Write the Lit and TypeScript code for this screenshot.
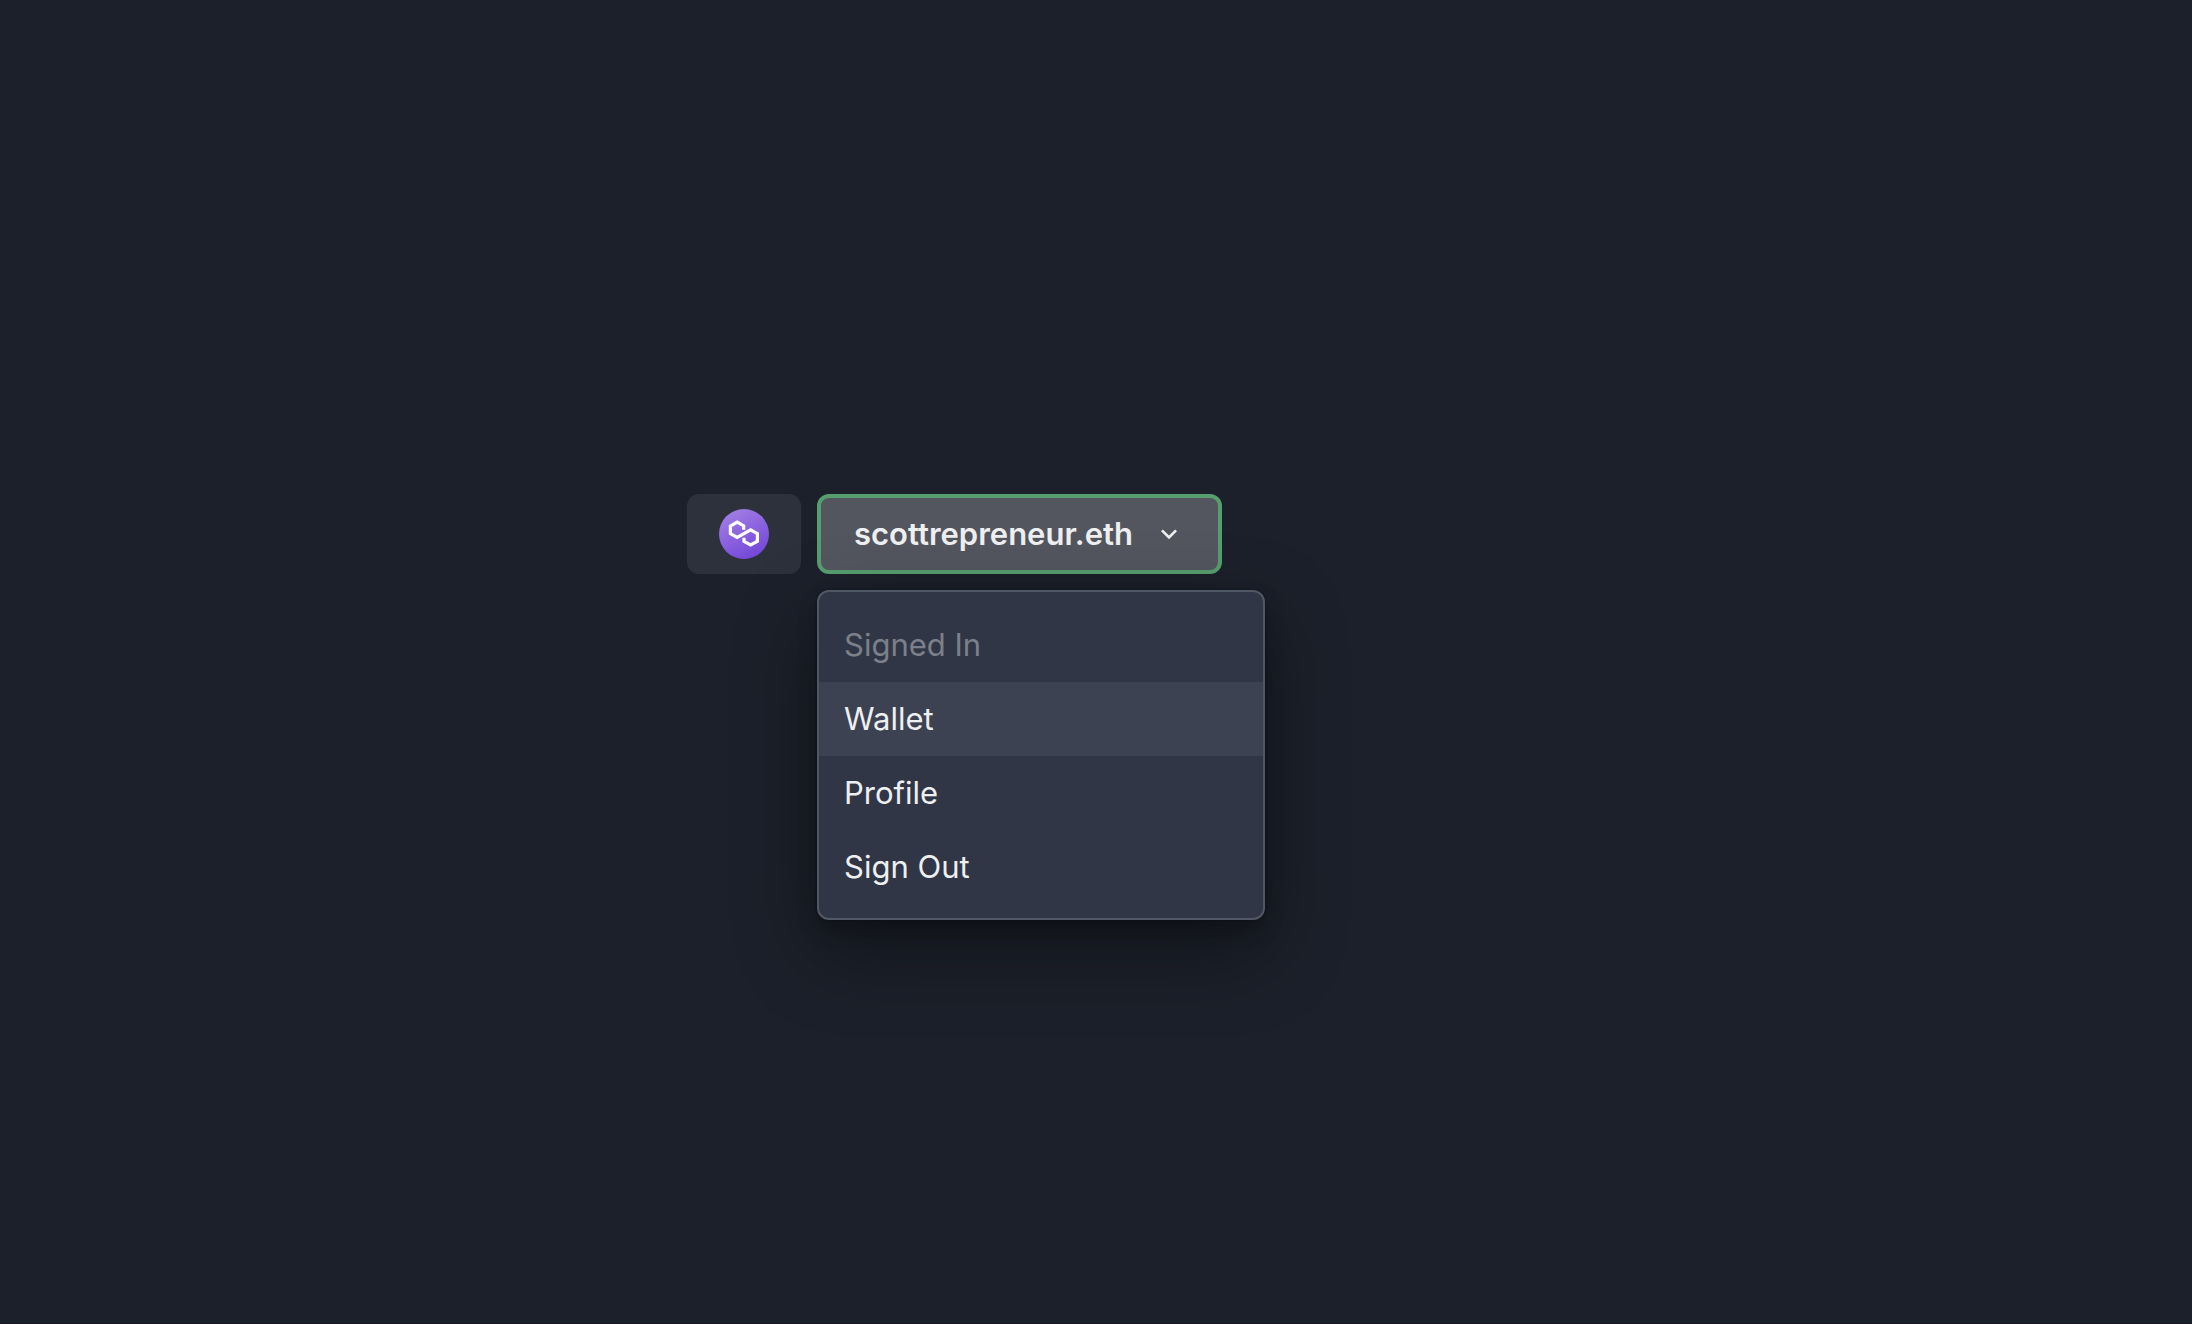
import { LitElement, html, css } from "lit";
import { customElement, state } from "lit/decorators.js";

@customElement("app-root")
export class AppRoot extends LitElement {
  static styles = css`
    :host {
      display: block;
      font-family: Inter, "Liberation Sans", sans-serif;
      color: #eeeff0;
    }
    .page {
      box-sizing: border-box;
      min-height: 100vh;
      padding: 494px 32px 32px 687px;
      background: #1c202a;
      border-bottom: 1px solid #1a1522;
    }
    .bar {
      display: flex;
      align-items: flex-start;
      gap: 16px;
    }
    button {
      box-sizing: border-box;
      margin: 0;
      border: 0;
      font: inherit;
      color: inherit;
      cursor: pointer;
    }
    .network {
      display: flex;
      align-items: center;
      height: 80px;
      padding: 0 32px;
      border-radius: 12px;
      background: #2d313b;
    }
    .network svg {
      display: block;
      width: 50px;
      height: 50px;
    }
    .account {
      position: relative;
    }
    .trigger {
      display: flex;
      align-items: center;
      gap: 20px;
      height: 80px;
      padding: 0 33px;
      border: 4px solid #579e6e;
      border-radius: 12px;
      background: #53565f;
      font-size: 31px;
      font-weight: 600;
      line-height: 40px;
    }
    .chevron {
      width: 32px;
      height: 32px;
    }
    .menu {
      position: absolute;
      top: 96px;
      left: 0;
      box-sizing: border-box;
      width: 448px;
      padding: 16px 0 14px;
      border: 2px solid #505765;
      border-radius: 12px;
      background: #303646;
      box-shadow:
        0 0 0 2px rgba(0, 0, 0, 0.1),
        0 10px 20px rgba(0, 0, 0, 0.2),
        0 30px 80px rgba(0, 0, 0, 0.4);
    }
    .item {
      display: block;
      width: 100%;
      padding: 12px 25px;
      background: transparent;
      font-size: 31px;
      line-height: 50px;
      text-align: left;
    }
    .item:disabled {
      color: #7b808a;
      cursor: default;
    }
    .item.active {
      background: #3d4252;
    }
  `;

  @state() private active = "Wallet";

  private items = ["Signed In", "Wallet", "Profile", "Sign Out"];

  render() {
    return html`
      <main class="page">
        <div class="bar">
          <button class="network" type="button" aria-label="Polygon">
            <svg viewBox="0 0 50 50" aria-hidden="true">
              <defs>
                <linearGradient id="disc" x1="0.25" y1="0" x2="0.75" y2="1">
                  <stop offset="0" stop-color="#a17fe4" />
                  <stop offset="1" stop-color="#7344d8" />
                </linearGradient>
              </defs>
              <circle cx="25" cy="25" r="25" fill="url(#disc)" />
              <path
                d="M24.7 20.8V16.9L18.2 13.2L11.4 17.1V24.6L18.2 28.4L31.6 20.8L38.4 24.7V32.2L31.6 36L25 32.3V28.8"
                fill="none"
                stroke="#fff"
                stroke-width="3.2"
              />
            </svg>
          </button>
          <div class="account">
            <button
              class="trigger"
              type="button"
              aria-haspopup="menu"
              aria-expanded="true"
            >
              <span>scottrepreneur.eth</span>
              <svg class="chevron" viewBox="0 0 24 24" aria-hidden="true">
                <path
                  fill="currentColor"
                  d="M16.59 8.59L12 13.17 7.41 8.59 6 10l6 6 6-6z"
                />
              </svg>
            </button>
            <div class="menu" role="menu">
              ${this.items.map(
                (label, i) => html`
                  <button
                    class="item ${label === this.active ? "active" : ""}"
                    type="button"
                    role="menuitem"
                    ?disabled=${i === 0}
                    @mouseenter=${() => (this.active = label)}
                  >
                    ${label}
                  </button>
                `
              )}
            </div>
          </div>
        </div>
      </main>
    `;
  }
}
